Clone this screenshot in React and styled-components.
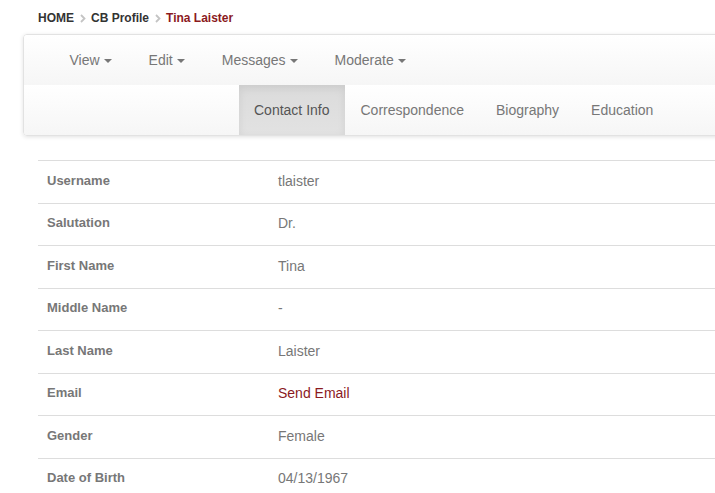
import React from 'react';
import styled, { createGlobalStyle } from 'styled-components';

const GlobalStyle = createGlobalStyle`
    html, body {
        margin: 0;
        padding: 0;
        background: #fff;
        overflow: hidden;
    }
    body {
        font-family: "Liberation Sans", Arial, sans-serif;
        font-size: 14px;
        color: #333;
    }
`;

const Page = styled.div`
    width: 760px;
    padding: 0 0 0 23px;
`;

const Breadcrumb = styled.ol`
    display: flex;
    align-items: flex-start;
    list-style: none;
    margin: 0;
    padding: 11px 0 0 15px;
    height: 34px;
    box-sizing: border-box;
    font-size: 12px;
    font-weight: bold;
`;

const Crumb = styled.li`
    color: ${props => (props.current ? '#8b1a1e' : '#333')};
    display: flex;
    align-items: center;
`;

const Chevron = styled.svg`
    width: 6px;
    height: 9px;
    margin: 3px 5px 0 6px;
`;

const NavBox = styled.div`
    border: 1px solid #e2e2e2;
    border-radius: 4px;
    box-shadow: 0 1px 4px rgba(0, 0, 0, 0.12);
    overflow: hidden;
    width: 740px;
`;

const NavRow = styled.ul`
    display: flex;
    list-style: none;
    margin: 0;
    padding: 0 0 0 ${props => props.offset}px;
    height: ${props => props.height}px;
    background: linear-gradient(to bottom, #ffffff 0%, #f6f6f6 100%);
`;

const NavItem = styled.li`
    display: flex;
    align-items: center;
    padding: 0 ${props => props.pad}px;
    color: ${props => (props.active ? '#555' : '#777')};
    font-size: 14px;
    background: ${props => (props.active
        ? 'linear-gradient(to bottom, #dbdbdb 0%, #e2e2e2 100%)'
        : 'transparent')};
    box-shadow: ${props => (props.active ? 'inset 0 3px 9px rgba(0, 0, 0, 0.075)' : 'none')};
`;

const Caret = styled.span`
    display: inline-block;
    width: 0;
    height: 0;
    margin-left: 4px;
    margin-top: 1px;
    border-top: 4px solid #777;
    border-left: 4px solid transparent;
    border-right: 4px solid transparent;
`;

const Table = styled.table`
    border-collapse: collapse;
    margin: 24px 0 0 15px;
    width: 700px;
    font-size: 13px;
`;

const Row = styled.tr`
    border-top: 1px solid #ddd;
`;

const Label = styled.th`
    text-align: left;
    font-weight: bold;
    color: #777;
    width: 215px;
    padding: 9.75px 8px 11.75px 9px;
    line-height: 20px;
`;

const Value = styled.td`
    color: ${props => (props.link ? '#8b1a1e' : '#777')};
    font-size: 14px;
    padding: 9.75px 8px 11.75px 8px;
    line-height: 20px;
`;

const menus = ['View', 'Edit', 'Messages', 'Moderate'];
const tabs = ['Contact Info', 'Correspondence', 'Biography', 'Education'];

const fields = [
    ['Username', 'tlaister'],
    ['Salutation', 'Dr.'],
    ['First Name', 'Tina'],
    ['Middle Name', '-'],
    ['Last Name', 'Laister'],
    ['Email', 'Send Email', true],
    ['Gender', 'Female'],
    ['Date of Birth', '04/13/1967'],
];

const Sep = () => (
    <Chevron viewBox="0 0 6 9">
        <path d="M1 1 L4.5 4.5 L1 8" fill="none" stroke="#c4c4c4" strokeWidth="1.8" />
    </Chevron>
);

const App = () => (
    <Page>
        <GlobalStyle />
        <Breadcrumb>
            <Crumb>HOME</Crumb>
            <Sep />
            <Crumb>CB Profile</Crumb>
            <Sep />
            <Crumb current>Tina Laister</Crumb>
        </Breadcrumb>
        <NavBox>
            <NavRow offset={27} height={50}>
                {menus.map(m => (
                    <NavItem key={m} pad={18.5}>
                        {m}
                        <Caret />
                    </NavItem>
                ))}
            </NavRow>
            <NavRow offset={215} height={50}>
                {tabs.map((t, i) => (
                    <NavItem key={t} pad={i === 0 ? 15 : 16} active={i === 0}>{t}</NavItem>
                ))}
            </NavRow>
        </NavBox>
        <Table>
            <tbody>
                {fields.map(([label, value, link]) => (
                    <Row key={label}>
                        <Label>{label}</Label>
                        <Value link={link}>{value}</Value>
                    </Row>
                ))}
            </tbody>
        </Table>
    </Page>
);

export default App;
